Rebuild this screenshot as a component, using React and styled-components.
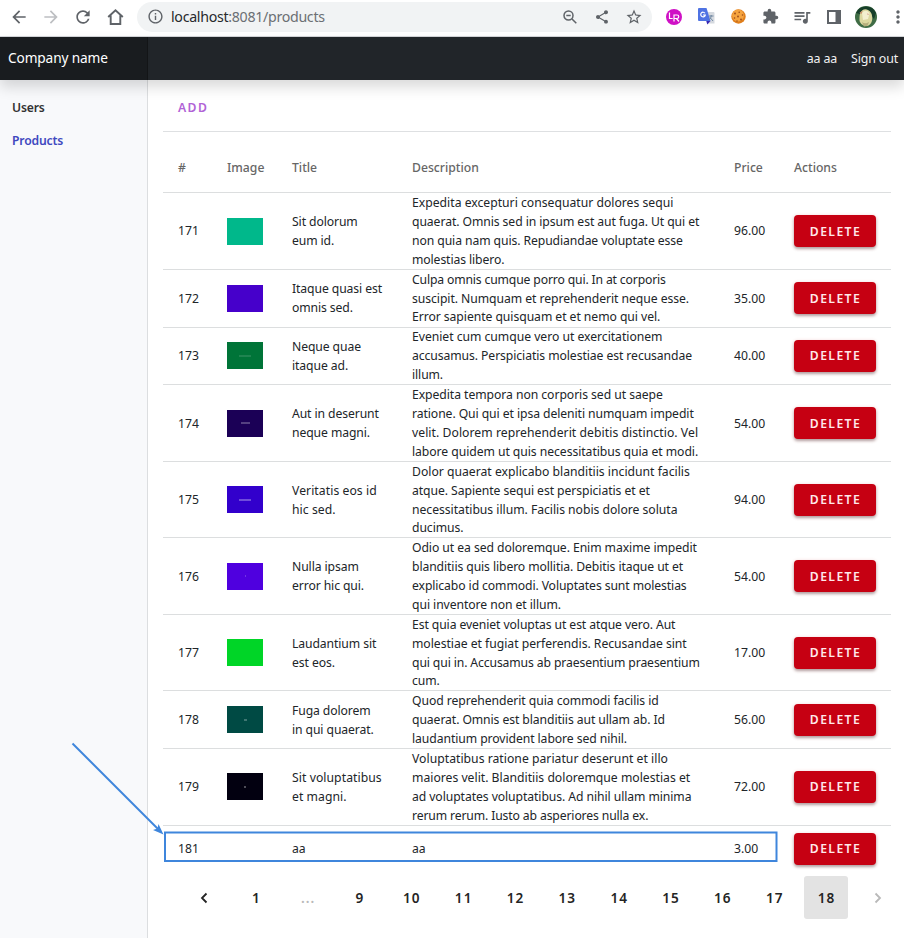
import React from "react";
import styled, { createGlobalStyle, css } from "styled-components";
import {
  MdArrowBack, MdArrowForward, MdRefresh, MdInfoOutline,
  MdShare, MdStarBorder, MdExtension, MdQueueMusic, MdMoreVert,
} from "react-icons/md";

const Global = createGlobalStyle`
  * { box-sizing: border-box; }
  body { margin: 0; background: #fff; overflow: hidden; }
  button { font: inherit; border: 0; background: none; padding: 0; cursor: pointer; }
  a { color: inherit; text-decoration: none; }
`;

const Page = styled.div`
  position: relative;
  width: 904px;
  height: 938px;
  overflow: hidden;
  display: flex;
  flex-direction: column;
  font-family: "Noto Sans", "Open Sans", sans-serif;
  font-size: 12.2px;
  color: #212529;
`;

const BrowserBar = styled.div`
  flex: 0 0 37px;
  display: flex;
  align-items: center;
  padding: 0 0 3px 3px;
  border-bottom: 1px solid #d5d7da;
  color: #5f6368;
`;

const NavIcons = styled.div`
  display: grid;
  grid-template-columns: repeat(4, 32px);
`;

const IconButton = styled.button`
  display: flex;
  align-items: center;
  justify-content: center;
  height: 28px;
  font-size: ${(p) => p.$size || 20}px;
  color: ${(p) => (p.$muted ? "#bdbfc2" : "#5f6368")};
`;

const AddressBar = styled.div`
  flex: 0 0 515px;
  height: 30px;
  margin-left: 6px;
  padding: 0 2px 0 10px;
  display: flex;
  align-items: center;
  border-radius: 15px;
  background: #f1f3f4;
  font-size: 17px;
`;

const Address = styled.span`
  flex: 1;
  margin-left: 7px;
  padding-bottom: 1px;
  font-size: 14.2px;
  letter-spacing: -0.3px;
  white-space: nowrap;
  color: #6b6f73;
`;

const Host = styled.span`
  color: #27292c;
`;

const AddressActions = styled.div`
  display: grid;
  grid-template-columns: repeat(3, 32px);
`;

const Extensions = styled.div`
  flex: none;
  display: grid;
  grid-template-columns: repeat(7, 32px);
  margin-left: 6px;
`;

const MenuButton = styled(IconButton)`
  flex: none;
  margin-left: 6px;
`;

const TopBar = styled.header`
  position: relative;
  z-index: 1;
  flex: 0 0 43px;
  display: flex;
  align-items: center;
  background: #212529;
  color: #fff;
  box-shadow: 0 7px 14px rgba(0, 0, 0, 0.15);
`;

const Brand = styled.a`
  width: 148px;
  height: 43px;
  padding-left: 8px;
  line-height: 42px;
  font-size: 13.7px;
  letter-spacing: -0.14px;
  background: #191c1f;
  box-shadow: inset -1px 0 0 #131517;
`;

const Account = styled.nav`
  margin-left: auto;
  padding-right: 6px;
  display: flex;
  gap: 14px;
  color: #f1f1f2;
  font-size: 12.4px;
  letter-spacing: -0.15px;
`;

const Body = styled.div`
  flex: 1;
  display: flex;
  min-height: 0;
`;

const Sidebar = styled.nav`
  flex: 0 0 148px;
  display: flex;
  flex-direction: column;
  padding: 11px 0 0 12px;
  background: #f8f9fb;
  border-right: 1px solid #dcdee0;
`;

const SideLink = styled.a`
  height: 33px;
  line-height: 33px;
  font-weight: 600;
  letter-spacing: -0.17px;
  color: ${(p) => (p.$active ? "#4048bf" : "#333")};
`;

const Main = styled.main`
  width: 728px;
  margin-left: 15px;
`;

const Toolbar = styled.div`
  height: 52px;
  padding: 3px 15px 0;
  display: flex;
  align-items: center;
  border-bottom: 1px solid #dee0e2;
`;

const AddButton = styled.button`
  font-weight: 600;
  letter-spacing: 1.4px;
  color: #b163d6;
`;

const rowGrid = css`
  display: grid;
  grid-template-columns: 49px 65px 120px 322px 60px 1fr;
  align-items: center;
  padding-left: 15px;
`;

const HeadRow = styled.div`
  ${rowGrid}
  height: 61.3px;
  padding-top: 10px;
  border-bottom: 1px solid #dcdedf;
  font-weight: 500;
  color: #666;
`;

const Row = styled.div`
  ${rowGrid}
  height: ${(p) => p.$height}px;
  border-bottom: ${(p) => (p.$last ? "0" : "1px solid #dcdedf")};
  line-height: 18.9px;
`;

const Text = styled.div`
  padding-top: ${(p) => (p.$nudge ? 0.8 : 0)}px;
  white-space: nowrap;
`;

const Line = styled.div`
  letter-spacing: ${(p) => p.$track}px;
`;

const Swatch = styled.div`
  width: 36px;
  height: 27px;
  margin-bottom: 1px;
  display: flex;
  align-items: center;
  justify-content: center;
  background: ${(p) => p.$color};
`;

const SwatchMark = styled.span`
  width: ${(p) => p.$width}px;
  height: 2px;
  background: rgba(255, 255, 255, ${(p) => p.$alpha});
`;

const DeleteButton = styled.button`
  width: 82px;
  height: 32px;
  margin-bottom: 1px;
  padding: 2px 0 0 1px;
  border-radius: 4px;
  background: #c60012;
  color: #ffe9ea;
  font-weight: 600;
  letter-spacing: 1.4px;
  box-shadow: 0 2px 3px rgba(0, 0, 0, 0.28), 0 1px 4px rgba(198, 0, 18, 0.2);
`;

const Pagination = styled.nav`
  display: grid;
  grid-template-columns: repeat(14, 51.85px);
  justify-items: center;
  margin: 3.7px 0 0 15px;
`;

const PageButton = styled.button`
  width: 44px;
  height: 43px;
  display: flex;
  align-items: center;
  justify-content: center;
  border-radius: 3px;
  font-size: 13.6px;
  font-weight: 600;
  letter-spacing: 1px;
  text-indent: 1px;
  background: ${(p) => (p.$current ? "#e3e3e3" : "transparent")};
  color: ${(p) => (p.$muted ? "#b9b9b9" : "#242424")};
`;

const Annotation = styled.svg`
  position: absolute;
  z-index: 2;
  left: 0;
  top: 0;
  pointer-events: none;
`;

const products = [
  { id: 171, color: "#00b88b", title: ["Sit dolorum", "eum id."], price: "96.00", track: [0, -0.08, -0.09, -0.1],
    text: ["Expedita excepturi consequatur dolores sequi", "quaerat. Omnis sed in ipsum est aut fuga. Ut qui et", "non quia nam quis. Repudiandae voluptate esse", "molestias libero."] },
  { id: 172, color: "#4600cb", title: ["Itaque quasi est", "omnis sed."], price: "35.00", track: [-0.15, -0.06, -0.06],
    text: ["Culpa omnis cumque porro qui. In at corporis", "suscipit. Numquam et reprehenderit neque esse.", "Error sapiente quisquam et et nemo qui vel."] },
  { id: 173, color: "#007438", mark: [12, 0.12], title: ["Neque quae", "itaque ad."], price: "40.00", track: [-0.03, -0.08, -0.1],
    text: ["Eveniet cum cumque vero ut exercitationem", "accusamus. Perspiciatis molestiae est recusandae", "illum."] },
  { id: 174, color: "#1b0056", mark: [9, 0.25], title: ["Aut in deserunt", "neque magni."], price: "54.00", track: [-0.06, -0.08, 0.05, -0.06],
    text: ["Expedita tempora non corporis sed ut saepe", "ratione. Qui qui et ipsa deleniti numquam impedit", "velit. Dolorem reprehenderit debitis distinctio. Vel", "labore quidem ut quis necessitatibus quia et modi."] },
  { id: 175, color: "#3200cc", mark: [12, 0.3], title: ["Veritatis eos id", "hic sed."], price: "94.00", track: [0, -0.07, -0.03, -0.08], titleTrack: 0.06,
    text: ["Dolor quaerat explicabo blanditiis incidunt facilis", "atque. Sapiente sequi est perspiciatis et et", "necessitatibus illum. Facilis nobis dolore soluta", "ducimus."] },
  { id: 176, color: "#4f00df", mark: [1, 0.2], title: ["Nulla ipsam", "error hic qui."], price: "54.00", track: [-0.07, -0.1, -0.1, -0.07],
    text: ["Odio ut ea sed doloremque. Enim maxime impedit", "blanditiis quis libero mollitia. Debitis itaque ut et", "explicabo id commodi. Voluptates sunt molestias", "qui inventore non et illum."] },
  { id: 177, color: "#00d527", title: ["Laudantium sit", "est eos."], price: "17.00", track: [-0.1, -0.03, -0.12, -0.1],
    text: ["Est quia eveniet voluptas ut est atque vero. Aut", "molestiae et fugiat perferendis. Recusandae sint", "qui qui in. Accusamus ab praesentium praesentium", "cum."] },
  { id: 178, color: "#004a44", mark: [3, 0.25], title: ["Fuga dolorem", "in qui quaerat."], price: "56.00", track: [-0.06, -0.09, -0.08],
    text: ["Quod reprehenderit quia commodi facilis id", "quaerat. Omnis est blanditiis aut ullam ab. Id", "laudantium provident labore sed nihil."] },
  { id: 179, color: "#020010", mark: [2, 0.3], title: ["Sit voluptatibus", "et magni."], price: "72.00", track: [0.02, 0, -0.08, -0.13], titleTrack: 0.06,
    text: ["Voluptatibus ratione pariatur deserunt et illo", "maiores velit. Blanditiis doloremque molestias et", "ad voluptates voluptatibus. Ad nihil ullam minima", "rerum rerum. Iusto ab asperiores nulla ex."] },
  { id: 181, title: ["aa"], text: ["aa"], price: "3.00", track: [-0.1] },
];

const rowHeights = { 1: 46.8, 3: 57.8, 4: 76.5 };

const Lines = ({ items, track }) => (
  <Text $nudge>
    {items.map((t, i) => <Line key={t} $track={Array.isArray(track) ? track[i] : track}>{t}</Line>)}
  </Text>
);

function ProductRow({ product, last }) {
  const { id, color, mark, title, text, price, track, titleTrack = -0.1 } = product;
  return (
    <Row $height={rowHeights[text.length]} $last={last}>
      <Text $nudge>{id}</Text>
      <div>{color && <Swatch $color={color}>{mark && <SwatchMark $width={mark[0]} $alpha={mark[1]} />}</Swatch>}</div>
      <Lines items={title} track={titleTrack} />
      <Lines items={text} track={track} />
      <Text $nudge>{price}</Text>
      <DeleteButton>DELETE</DeleteButton>
    </Row>
  );
}

const HomeIcon = () => (
  <svg width="17" height="16" viewBox="0 0 17 16">
    <path d="M1.200 8 8.500 1.300 15.800 8M3.700 6.500V15h9.600V6.500" fill="none" stroke="currentColor" strokeWidth="1.900" />
  </svg>
);

const ZoomOutIcon = () => (
  <svg width="14" height="14" viewBox="0 0 14 14">
    <circle cx="5.500" cy="5.500" r="4.500" fill="none" stroke="currentColor" strokeWidth="1.500" />
    <path d="M3.300 5.500h4.400M9 9l4.300 4.300" fill="none" stroke="currentColor" strokeWidth="1.500" />
  </svg>
);

const LogRocketIcon = () => (
  <svg width="16" height="16" viewBox="0 0 16 16">
    <circle cx="8" cy="8" r="8" fill="#cf10c5" />
    <path d="M3.500 3.500v6h3.200M8 12.500V6h3a1.700 1.700 0 0 1 0 3.500H8m2.400 0 2.600 3" fill="none" stroke="#fff" strokeWidth="1.200" />
  </svg>
);

const TranslateIcon = () => (
  <svg width="17" height="17" viewBox="0 0 17 17">
    <path d="M7 4h8.500a1 1 0 0 1 1 1v10.500H9z" fill="#d5d9df" />
    <path d="M1 0h7.500l4 13H1a1 1 0 0 1-1-1V1a1 1 0 0 1 1-1z" fill="#4f73e3" />
    <path d="M8.300 13h4.200l-3.200 3.500z" fill="#3727b5" />
    <path d="M7 5.300A2.300 2.300 0 1 0 7.300 7H5" fill="none" stroke="#fff" strokeWidth="1.200" />
    <path d="M11 8h4.500M13.200 7v1c-.3 2-1.200 3-2 3.700M12 9.500l3 3.500" fill="none" stroke="#66809b" strokeWidth=".9" />
  </svg>
);

const CookieIcon = () => (
  <svg width="15" height="15" viewBox="0 0 15 15">
    <circle cx="7.500" cy="7.500" r="7.200" fill="#e07f1c" />
    <circle cx="7" cy="6.500" r="5.900" fill="#f5a440" />
    <g fill="#9a4a17">
      <circle cx="4" cy="4.500" r=".9" /><circle cx="8.200" cy="3.300" r=".8" /><circle cx="11.500" cy="6" r=".8" />
      <circle cx="7" cy="7.500" r=".9" /><circle cx="3.500" cy="9" r=".8" /><circle cx="10" cy="10.500" r=".9" /><circle cx="6" cy="12" r=".7" />
    </g>
  </svg>
);

const SidePanelIcon = () => (
  <svg width="14" height="14" viewBox="0 0 14 14">
    <path d="M1 1h12v12H1z" fill="none" stroke="#5f6368" strokeWidth="2" />
    <path d="M8.500 1H13v12H8.500z" fill="#5f6368" />
  </svg>
);

const Avatar = () => (
  <svg width="22" height="22" viewBox="0 0 22 22">
    <circle cx="11" cy="11" r="11" fill="#3f6c45" />
    <path d="M1 7A11 11 0 0 1 21 7l-2 6-7-8-7 3z" fill="#173f2a" />
    <path d="M5 8c1-4 5-6 8-4 3 1.500 4 4 4.200 7 .3 4-1 7.500-4.500 9C8 20.500 4 17 4.500 13 4.600 11 4.500 10 5 8z" fill="#dcd8a0" />
    <path d="M7 7c2-3 6-3 7.500.5L13 13l-5 1z" fill="#f3efcf" />
    <path d="M7 16c2 1.500 4 2 7 0l-1.500 4-3.500.5z" fill="#b5ae7c" />
    <path d="M4.500 6.500 7.500 5l-1 3z" fill="#c98c6d" />
    <path d="m12.500 7 1.500 1.500-1.500.5z" fill="#d89a8a" />
  </svg>
);

const pages = ["1", "...", "9", "10", "11", "12", "13", "14", "15", "16", "17", "18"];

const Chevron = ({ right }) => (
  <svg width="8" height="12" viewBox="0 0 8 12">
    <path d={right ? "M1.500 1.500 6 6l-4.500 4.500" : "M6.500 1.500 2 6l4.500 4.500"} fill="none" stroke="currentColor" strokeWidth="1.800" />
  </svg>
);

export default function App() {
  return (
    <Page>
      <Global />
      <BrowserBar>
        <NavIcons>
          <IconButton><MdArrowBack /></IconButton>
          <IconButton $muted><MdArrowForward /></IconButton>
          <IconButton><MdRefresh /></IconButton>
          <IconButton><HomeIcon /></IconButton>
        </NavIcons>
        <AddressBar>
          <MdInfoOutline />
          <Address><Host>localhost</Host>:8081/products</Address>
          <AddressActions>
            <IconButton><ZoomOutIcon /></IconButton>
            <IconButton $size={16}><MdShare /></IconButton>
            <IconButton $size={18}><MdStarBorder /></IconButton>
          </AddressActions>
        </AddressBar>
        <Extensions>
          <IconButton><LogRocketIcon /></IconButton>
          <IconButton><TranslateIcon /></IconButton>
          <IconButton><CookieIcon /></IconButton>
          <IconButton $size={17}><MdExtension /></IconButton>
          <IconButton><MdQueueMusic /></IconButton>
          <IconButton><SidePanelIcon /></IconButton>
          <IconButton><Avatar /></IconButton>
        </Extensions>
        <MenuButton><MdMoreVert /></MenuButton>
      </BrowserBar>
      <TopBar>
        <Brand>Company name</Brand>
        <Account><a>aa aa</a><a>Sign out</a></Account>
      </TopBar>
      <Body>
        <Sidebar>
          <SideLink>Users</SideLink>
          <SideLink $active>Products</SideLink>
        </Sidebar>
        <Main>
          <Toolbar><AddButton>ADD</AddButton></Toolbar>
          <HeadRow>
            {["#", "Image", "Title", "Description", "Price", "Actions"].map((h) => <Text key={h}>{h}</Text>)}
          </HeadRow>
          {products.map((p, i) => <ProductRow key={p.id} product={p} last={i === products.length - 1} />)}
          <Pagination>
            <PageButton><Chevron /></PageButton>
            {pages.map((p) => <PageButton key={p} $muted={p === "..."} $current={p === "18"}>{p}</PageButton>)}
            <PageButton $muted><Chevron right /></PageButton>
          </Pagination>
        </Main>
      </Body>
      <Annotation width="904" height="938" viewBox="0 0 904 938">
        <rect x="165" y="832.500" width="611.500" height="28.500" fill="none" stroke="#3f86dc" strokeWidth="2" />
        <path d="M72.500 743.500 158 829" stroke="#3f86dc" strokeWidth="2" />
        <path d="M163.500 834.500 153 830l4.500-1.500L158.500 824z" fill="#3f86dc" />
      </Annotation>
    </Page>
  );
}
